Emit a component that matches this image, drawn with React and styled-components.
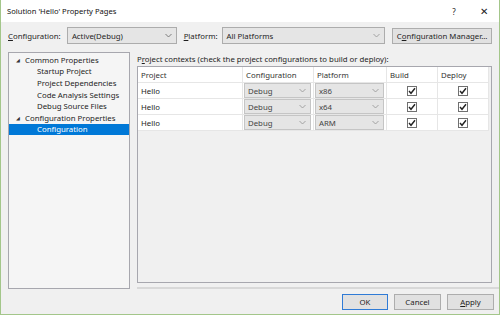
import React from "react";
import styled, { createGlobalStyle } from "styled-components";

const Global = createGlobalStyle`
  html, body { margin: 0; padding: 0; background: #fff; }
  body { font-family: "Noto Sans", "Open Sans", sans-serif; font-size: 7.8px; color: #1e1e1e; }
  * { box-sizing: border-box; }
`;

const Window = styled.div`
  width: 500px;
  height: 315px;
  display: flex;
  flex-direction: column;
  border: 1px solid #a3c68a;
  border-top: none;
  background: #f0f0f0;
  overflow: hidden;
`;

const TitleBar = styled.div`
  height: 22px;
  background: #fff;
  display: flex;
  align-items: center;
  padding-left: 6px;
  font-size: 7.6px;
  color: #111;
`;

const TitleText = styled.div`
  flex: 1;
`;

const TitleButton = styled.div`
  width: 30px;
  text-align: center;
  font-size: ${(p) => p.$size || 8}px;
  color: #222;
`;

const Body = styled.div`
  flex: 1;
  display: flex;
  flex-direction: column;
  padding: 5px 7px 0 7px;
`;

const TopRow = styled.div`
  display: flex;
  align-items: center;
  height: 17px;
`;

const Label = styled.span`
  width: ${(p) => p.$w}px;
  u { text-decoration: underline; }
`;

const Combo = styled.div`
  width: ${(p) => p.$w}px;
  height: 17px;
  border: 1px solid #acacac;
  background: #e5e5e5;
  display: flex;
  align-items: center;
  padding-left: 4px;
  margin-right: ${(p) => p.$mr || 0}px;
`;

const ComboText = styled.span`
  flex: 1;
`;

const Chevron = styled.svg`
  width: 7px;
  height: 5px;
  margin-right: 4px;
`;

const Button = styled.div`
  width: ${(p) => p.$w}px;
  height: 16px;
  border: 1px solid ${(p) => (p.$default ? "#2f7bd6" : "#adadad")};
  background: #e1e1e1;
  display: flex;
  align-items: center;
  justify-content: center;
  white-space: nowrap;
  u { text-decoration: underline; }
`;

const Main = styled.div`
  display: flex;
  margin-top: 8px;
  gap: 7px;
`;

const Tree = styled.div`
  width: 122px;
  height: 237px;
  background: #f5f5f5;
  border: 1px solid #a7a7ae;
  padding-top: 1px;
`;

const TreeItem = styled.div`
  height: 11.6px;
  display: flex;
  align-items: center;
  padding-left: ${(p) => p.$indent}px;
  background: ${(p) => (p.$selected ? "#0078d7" : "transparent")};
  color: ${(p) => (p.$selected ? "#fff" : "#1e1e1e")};
  white-space: nowrap;
`;

const Arrow = styled.span`
  width: 9px;
  font-size: 5px;
  color: #333;
`;

const Right = styled.div`
  flex: 1;
  display: flex;
  flex-direction: column;
`;

const Caption = styled.div`
  height: 13px;
  display: flex;
  align-items: center;
  margin-bottom: 1px;
  u { text-decoration: underline; }
`;

const Grid = styled.div`
  height: 217px;
  border: 1px solid #a7a7ae;
  background: #f0f0f0;
  padding-right: 2px;
`;

const Row = styled.div`
  display: grid;
  grid-template-columns: 105px 71px 73px 51px 1fr;
  height: 16px;
  background: #fff;
  border-bottom: 1px solid #e6e6e6;
`;

const Cell = styled.div`
  display: flex;
  align-items: center;
  justify-content: ${(p) => (p.$center ? "center" : "flex-start")};
  padding-left: ${(p) => (p.$center ? 0 : 3)}px;
  border-right: 1px solid #e6e6e6;
  color: ${(p) => (p.$head ? "#333" : "#1e1e1e")};
`;

const CellCombo = styled.div`
  width: 100%;
  height: 15px;
  margin: 0 1px 0 -2px;
  background: #e5e5e5;
  border: 1px solid #c5c5c5;
  display: flex;
  align-items: center;
  padding-left: 3px;
  color: #444;
`;

const Check = styled.div`
  width: 10px;
  height: 10px;
  border: 1px solid #707070;
  background: #fff;
  display: flex;
  align-items: center;
  justify-content: center;
`;

const Separator = styled.div`
  height: 2px;
  margin-top: 4px;
  background: #d8d8d8;
  margin-right: -7px;
`;

const Footer = styled.div`
  display: flex;
  justify-content: flex-end;
  gap: 6px;
  margin-top: 5px;
  margin-right: -2px;
`;

const Chev = ({ color = "#707070" }) => (
  <Chevron viewBox="0 0 7 5">
    <path d="M0.5 1 L3.5 4 L6.5 1" fill="none" stroke={color} strokeWidth="0.9" />
  </Chevron>
);

const Tick = () => (
  <svg width="8" height="8" viewBox="0 0 8 8">
    <path d="M1 4 L3 6.3 L7 1.2" fill="none" stroke="#222" strokeWidth="1.4" />
  </svg>
);

const rows = [
  ["Hello", "Debug", "x86"],
  ["Hello", "Debug", "x64"],
  ["Hello", "Debug", "ARM"],
];

export default function App() {
  return (
    <>
      <Global />
      <Window>
        <TitleBar>
          <TitleText>Solution 'Hello' Property Pages</TitleText>
          <TitleButton>?</TitleButton>
          <TitleButton $size={10}>✕</TitleButton>
        </TitleBar>
        <Body>
          <TopRow>
            <Label $w={59}>
              <u>C</u>onfiguration:
            </Label>
            <Combo $w={110} $mr={7}>
              <ComboText>Active(Debug)</ComboText>
              <Chev />
            </Combo>
            <Label $w={38}>
              <u>P</u>latform:
            </Label>
            <Combo $w={164} $mr={7}>
              <ComboText>All Platforms</ComboText>
              <Chev color="#9a9a9a" />
            </Combo>
            <Button $w={100}>
              <span>
                C<u>o</u>nfiguration Manager...
              </span>
            </Button>
          </TopRow>
          <Main>
            <Tree>
              <TreeItem $indent={7}>
                <Arrow>◢</Arrow>Common Properties
              </TreeItem>
              <TreeItem $indent={28}>Startup Project</TreeItem>
              <TreeItem $indent={28}>Project Dependencies</TreeItem>
              <TreeItem $indent={28}>Code Analysis Settings</TreeItem>
              <TreeItem $indent={28}>Debug Source Files</TreeItem>
              <TreeItem $indent={7}>
                <Arrow>◢</Arrow>Configuration Properties
              </TreeItem>
              <TreeItem $indent={28} $selected>
                Configuration
              </TreeItem>
            </Tree>
            <Right>
              <Caption>
                <span>
                  P<u>r</u>oject contexts (check the project configurations to build or deploy):
                </span>
              </Caption>
              <Grid>
                <Row>
                  <Cell $head>Project</Cell>
                  <Cell $head>Configuration</Cell>
                  <Cell $head>Platform</Cell>
                  <Cell $head>Build</Cell>
                  <Cell $head>Deploy</Cell>
                </Row>
                {rows.map(([p, c, pl]) => (
                  <Row key={pl}>
                    <Cell>{p}</Cell>
                    <Cell>
                      <CellCombo>
                        <ComboText>{c}</ComboText>
                        <Chev color="#9a9a9a" />
                      </CellCombo>
                    </Cell>
                    <Cell>
                      <CellCombo>
                        <ComboText>{pl}</ComboText>
                        <Chev color="#9a9a9a" />
                      </CellCombo>
                    </Cell>
                    <Cell $center>
                      <Check>
                        <Tick />
                      </Check>
                    </Cell>
                    <Cell $center>
                      <Check>
                        <Tick />
                      </Check>
                    </Cell>
                  </Row>
                ))}
              </Grid>
              <Separator />
            </Right>
          </Main>
          <Footer>
            <Button $w={46} $default>
              OK
            </Button>
            <Button $w={47}>Cancel</Button>
            <Button $w={47}>
              <span>
                <u>A</u>pply
              </span>
            </Button>
          </Footer>
        </Body>
      </Window>
    </>
  );
}
